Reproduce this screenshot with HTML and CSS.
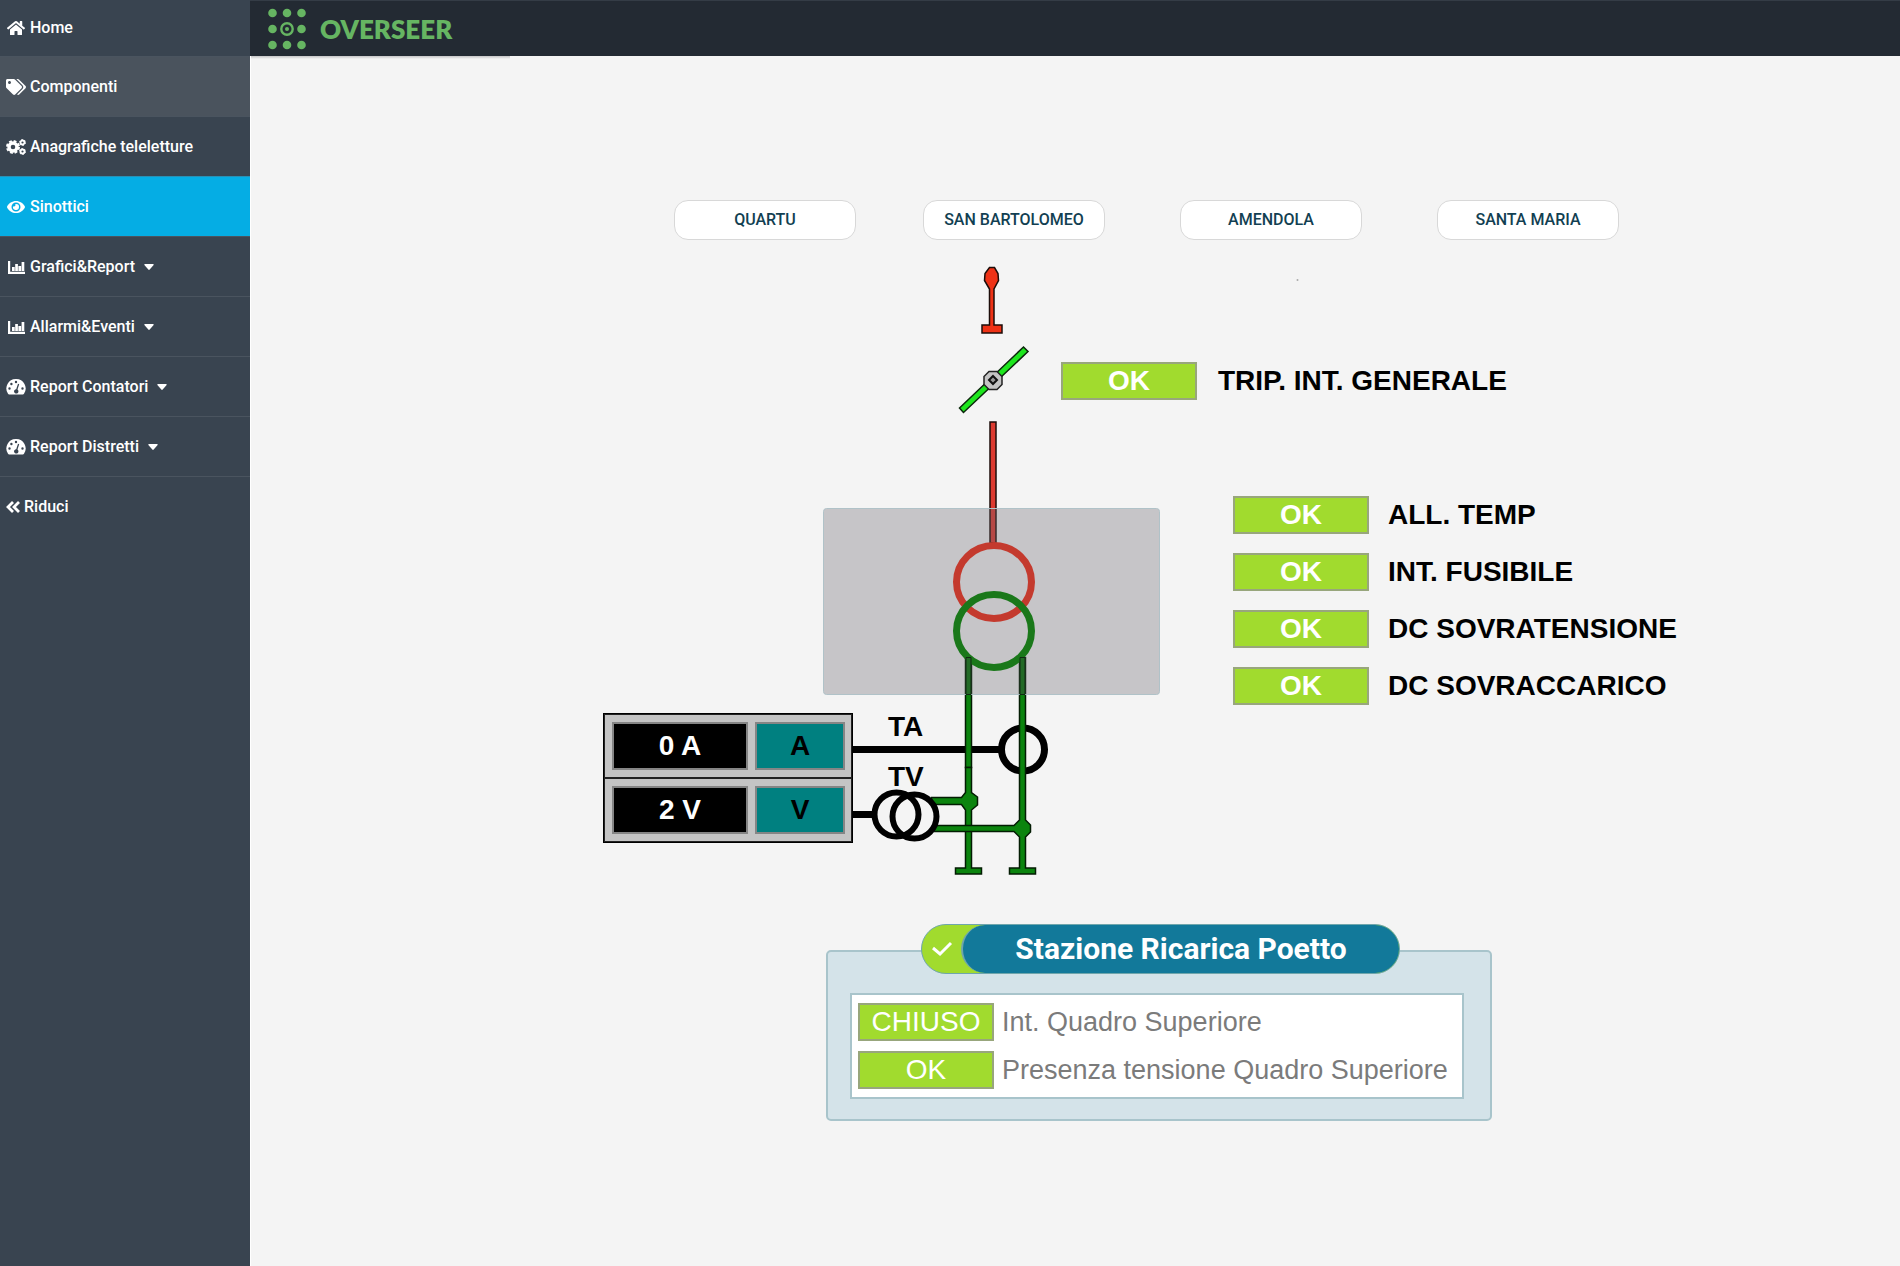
FILE: index.html
```html
<!DOCTYPE html>
<html lang="it">
<head>
<meta charset="utf-8">
<title>Overseer - Sinottici</title>
<meta name="viewport" content="width=device-width, initial-scale=1">
<link rel="stylesheet" href="styles.css">
</head>
<body>
<svg class="defs" aria-hidden="true">
  <symbol id="i-chart" viewBox="0 0 18 16">
    <path d="M1 2h2.200v10.800H18V15H1z"/>
    <path d="M5 8h2.700v4H5zM8.200 5h2.700v7H8.200zM11.400 7h2.700v5h-2.700zM14.600 3h2.700v9h-2.700z"/>
  </symbol>
  <symbol id="i-gauge" viewBox="0 0 20 16">
    <path fill-rule="evenodd" d="M10 0a9.500 9.500 0 0 0-8 14.800q.4.700 1.200.7h13.600q.8 0 1.200-.7A9.500 9.500 0 0 0 10 0zM3.500 8.300a1.200 1.200 0 1 1 0 2.400 1.200 1.200 0 0 1 0-2.400zM5.400 3.800a1.200 1.200 0 1 1 0 2.400 1.200 1.200 0 0 1 0-2.400zM10 1.800a1.200 1.200 0 1 1 0 2.400 1.200 1.200 0 0 1 0-2.400zM16.500 8.300a1.200 1.200 0 1 1 0 2.400 1.200 1.200 0 0 1 0-2.400zM12 4.800l1.200.4-1.700 5.400a2.200 2.200 0 1 1-1.300-.4z"/>
  </symbol>
  <symbol id="i-caret" viewBox="0 0 10 6"><path d="M1 0h8q1 .2.600 1L5.700 5.600q-.7.600-1.400 0L.4 1Q0 .2 1 0z"/></symbol>
</svg>

<div class="app">
  <nav class="sidebar" aria-label="Menu principale">
    <a class="item" href="#home">
      <svg class="icon" viewBox="0 0 576 512"><path d="M280.370 148.260L96 300.110V464a16 16 0 0 0 16 16l112.060-.29a16 16 0 0 0 15.920-16V368a16 16 0 0 1 16-16h64a16 16 0 0 1 16 16v95.640a16 16 0 0 0 16 16.050L464 480a16 16 0 0 0 16-16V300L295.670 148.260a12.190 12.190 0 0 0-15.300 0zM571.600 251.470L488 182.560V44.050a12 12 0 0 0-12-12h-56a12 12 0 0 0-12 12v72.610L318.470 43a48 48 0 0 0-61 0L4.340 251.470a12 12 0 0 0-1.600 16.900l25.500 31A12 12 0 0 0 45.150 301l235.220-193.740a12.190 12.190 0 0 1 15.300 0L530.900 301a12 12 0 0 0 16.900-1.600l25.500-31a12 12 0 0 0-1.700-16.930z"/></svg>
      <span>Home</span>
    </a>
    <a class="item hover" href="#componenti">
      <svg class="icon" viewBox="0 0 640 512"><path d="M497.941 225.941L286.059 14.059A48 48 0 0 0 252.118 0H48C21.490 0 0 21.490 0 48v204.118a48 48 0 0 0 14.059 33.941l211.882 211.882c18.744 18.745 49.136 18.746 67.882 0l204.118-204.118c18.745-18.745 18.745-49.137 0-67.882zM112 160c-26.510 0-48-21.490-48-48s21.490-48 48-48 48 21.490 48 48-21.490 48-48 48zm513.941 133.823L421.823 497.941c-18.745 18.745-49.137 18.745-67.882 0l-.36-.36L527.640 323.522c16.999-16.999 26.360-39.600 26.360-63.640s-9.362-46.641-26.360-63.640L331.397 0h48.721a48 48 0 0 1 33.941 14.059l211.882 211.882c18.745 18.745 18.745 49.137 0 67.882z"/></svg>
      <span>Componenti</span>
    </a>
    <a class="item" href="#anagrafiche">
      <svg class="icon" viewBox="0 0 20 16" fill="none" stroke="currentColor">
        <circle cx="7" cy="8" r="4" stroke-width="3.400"/>
        <circle cx="7" cy="8" r="6" stroke-width="2" stroke-dasharray="2.800 1.910"/>
        <circle cx="16.500" cy="3.500" r="2" stroke-width="1.800"/>
        <circle cx="16.500" cy="3.500" r="3" stroke-width="1" stroke-dasharray="1.600 1.540"/>
        <circle cx="16.500" cy="12.500" r="2" stroke-width="1.800"/>
        <circle cx="16.500" cy="12.500" r="3" stroke-width="1" stroke-dasharray="1.600 1.540"/>
      </svg>
      <span>Anagrafiche teleletture</span>
    </a>
    <a class="item active" href="#sinottici" aria-current="page">
      <svg class="icon" viewBox="0 0 576 512"><path d="M572.520 241.400C518.290 135.590 410.930 64 288 64S57.680 135.640 3.480 241.410a32.350 32.350 0 0 0 0 29.190C57.710 376.410 165.070 448 288 448s230.320-71.640 284.520-177.410a32.350 32.350 0 0 0 0-29.190zM288 400a144 144 0 1 1 144-144 143.930 143.930 0 0 1-144 144zm0-240a95.310 95.310 0 0 0-25.310 3.790 47.850 47.850 0 0 1-66.900 66.900A95.780 95.780 0 1 0 288 160z"/></svg>
      <span>Sinottici</span>
    </a>
    <button class="item" type="button"><svg class="icon"><use href="#i-chart"/></svg><span>Grafici&amp;Report</span><svg class="caret"><use href="#i-caret"/></svg></button>
    <button class="item" type="button"><svg class="icon"><use href="#i-chart"/></svg><span>Allarmi&amp;Eventi</span><svg class="caret"><use href="#i-caret"/></svg></button>
    <button class="item" type="button"><svg class="icon"><use href="#i-gauge"/></svg><span>Report Contatori</span><svg class="caret"><use href="#i-caret"/></svg></button>
    <button class="item" type="button"><svg class="icon"><use href="#i-gauge"/></svg><span>Report Distretti</span><svg class="caret"><use href="#i-caret"/></svg></button>
    <button class="item" type="button">
      <svg class="icon narrow" viewBox="0 0 14 14" fill="none" stroke="currentColor" stroke-width="2.800"><path d="M7 2L2 7l5 5M13 2L8 7l5 5"/></svg>
      <span>Riduci</span>
    </button>
  </nav>

  <div class="page">
    <header class="topbar">
      <svg class="logo" viewBox="0 0 38 42" aria-hidden="true">
        <circle cx="4.500" cy="5" r="4.300"/><circle cx="19" cy="5" r="4.300"/><circle cx="33.500" cy="5" r="4.300"/>
        <circle cx="4.500" cy="21" r="4.300"/><circle cx="33.500" cy="21" r="4.300"/>
        <circle cx="4.500" cy="37" r="4.300"/><circle cx="19" cy="37" r="4.300"/><circle cx="33.500" cy="37" r="4.300"/>
        <circle cx="19" cy="21" r="5.700" fill="none" stroke="currentColor" stroke-width="2.400"/><circle cx="19" cy="21" r="2"/>
      </svg>
      <span class="brand">OVERSEER</span>
    </header>

    <main class="content">
      <div class="stations">
        <button type="button">QUARTU</button>
        <button type="button">SAN BARTOLOMEO</button>
        <button type="button">AMENDOLA</button>
        <button type="button">SANTA MARIA</button>
      </div>

      <div class="synoptic">
        <!-- single-line diagram: incoming feeder, breaker, transformer, TA and TV -->
        <svg class="wiring" viewBox="603 260 1080 664" aria-hidden="true">
          <circle cx="1297.500" cy="280" r="1" fill="#aaa"/>

          <g fill="#ee3216" stroke="#1c0d0a" stroke-width="1.500">
            <path d="M989.500 267.500h5l3.500 6 .5 7-4.500 8.500v36h8v8h-20v-8h7.500v-36l-5-8.500.5-7z"/>
          </g>
          <path d="M963.500 412.500l-4-4.500 64-61 4.500 4.500z" fill="#1ee61e" stroke="#0c280c" stroke-width="1.500"/>
          <path d="M989 371.500h8l5 5v8l-5 5h-8l-5-5v-8z" fill="#c4c4c4" stroke="#222" stroke-width="1.500"/>
          <path d="M993 376l4 4-4 4-4-4z" fill="#999" stroke="#111" stroke-width="2"/>
          <rect x="990" y="422" width="6" height="121" fill="#dc3a30" stroke="#1c0d0a" stroke-width="1.500"/>

          <g fill="none" stroke="#000" stroke-width="7">
            <path d="M853 749.500h146M853 814.500h20"/>
            <circle cx="1023" cy="749.500" r="21.500"/>
          </g>

          <g fill="#0b840e" stroke="#031c03" stroke-width="1.500">
            <rect x="965.500" y="657.500" width="6" height="110"/>
            <path d="M965.500 767.500h6v25l6 4.500v8l-6 5v58h10v6h-26v-6h10v-58l-4-5.500h-30v-7h30l4-5z"/>
            <path d="M1019.500 657.500h6v162.500l5 5v7l-5 5v31h10v6h-26v-6h10v-31l-5.500-5.500h-80v-6h80l5.500-5.500z"/>
          </g>
          <g fill="none" stroke="#000" stroke-width="6">
            <circle cx="896.500" cy="814.500" r="22"/>
            <circle cx="914.500" cy="816.500" r="22"/>
          </g>

          <rect x="823.500" y="508.500" width="336" height="186" rx="3" fill="#6a6870" fill-opacity=".33" stroke="#b0c2c8"/>
          <g fill="none" stroke-width="7">
            <ellipse cx="994" cy="582" rx="37.500" ry="36.500" stroke="#c43a2e"/>
            <ellipse cx="994" cy="631" rx="37.500" ry="36.500" stroke="#1a781a"/>
          </g>
          <path d="M966 657.500h5v37h-5zM1020 657.500h5v37h-5z" fill="#226a26" stroke="#102a12" stroke-width="1"/>
        </svg>

        <div class="signal general"><output class="badge">OK</output><span>TRIP. INT. GENERALE</span></div>

        <div class="alarms">
          <div class="signal"><output class="badge">OK</output><span>ALL. TEMP</span></div>
          <div class="signal"><output class="badge">OK</output><span>INT. FUSIBILE</span></div>
          <div class="signal"><output class="badge">OK</output><span>DC SOVRATENSIONE</span></div>
          <div class="signal"><output class="badge">OK</output><span>DC SOVRACCARICO</span></div>
        </div>

        <div class="meters">
          <div class="meter"><output class="value">0 A</output><span class="unit">A</span></div>
          <div class="meter"><output class="value">2 V</output><span class="unit">V</span></div>
        </div>
        <span class="tag ta">TA</span>
        <span class="tag tv">TV</span>
      </div>

      <section class="station">
        <h1 class="station-title">
          <svg class="check" viewBox="0 0 22 16" aria-hidden="true"><path d="M2 7l7 6L20 2"/></svg>
          <span>Stazione Ricarica Poetto</span>
        </h1>
        <div class="station-body">
          <div class="state"><output class="badge">CHIUSO</output><span>Int. Quadro Superiore</span></div>
          <div class="state"><output class="badge">OK</output><span>Presenza tensione Quadro Superiore</span></div>
        </div>
      </section>
    </main>
  </div>
</div>
</body>
</html>
```
FILE: styles.css
```css
* { box-sizing: border-box; }

body {
  margin: 0;
  background: #f4f4f4;
  font-family: "Liberation Sans", Arial, sans-serif;
}

.defs { position: absolute; width: 0; height: 0; }

.app {
  display: grid;
  grid-template-columns: 250px minmax(0, 1fr);
  min-height: 100vh;
}

/* sidebar */
.sidebar {
  display: flex;
  flex-direction: column;
  background: #394450;
}

.item {
  display: flex;
  align-items: center;
  gap: 4px;
  height: 60px;
  padding: 0 6px;
  border: 0;
  border-top: 1px solid #4a545f;
  background: none;
  color: #fff;
  font: 500 16px/20px Roboto, sans-serif;
  text-align: left;
  text-decoration: none;
  cursor: pointer;
}

.item:first-child { height: 56px; border-top: 0; }
.item.hover { background: #4a535d; }
.item.active { background: #05ade4; border-color: #2a8fb4; }

.icon { width: 20px; height: 16px; fill: currentColor; flex: none; }
.icon[fill="none"] { fill: none; }
.icon.narrow { width: 14px; height: 14px; }
.caret { width: 10px; height: 6px; margin-left: 5px; fill: currentColor; }

/* header */
.page { display: flex; flex-direction: column; }

.topbar {
  display: flex;
  align-items: center;
  gap: 14px;
  height: 56px;
  padding: 0 18px;
  background: #232a33;
  border-top: 1px solid #343c46;
  color: #66b562;
}

.logo { width: 38px; height: 42px; fill: currentColor; }
.brand { font: 800 26px/32px Lato, sans-serif; }

/* synoptic page */
.content {
  flex: 1;
  padding: 144px 217px 144px 352px;
  border-left: 1px solid #fff;
  background: linear-gradient(#c4c4c6, #f4f4f4) 0 0 / 259px 3px no-repeat;
}

.stations {
  display: grid;
  grid-template-columns: 249px 257px 257px 182px;
  margin-left: 71px;
}

.stations button {
  width: 182px;
  height: 40px;
  padding: 0;
  border: 1px solid #d8d8d8;
  border-radius: 14px;
  background: #fff;
  color: #123f52;
  font: 500 16px/20px Roboto, sans-serif;
  cursor: pointer;
}

.synoptic {
  position: relative;
  width: 1080px;
  height: 664px;
  margin-top: 20px;
  color: #000;
  font-size: 28px;
  font-weight: bold;
  line-height: 32px;
}

.wiring { position: absolute; left: 0; top: 0; width: 1080px; height: 664px; }

.signal { display: flex; align-items: center; gap: 19px; white-space: nowrap; }

.badge {
  display: flex;
  align-items: center;
  justify-content: center;
  width: 136px;
  height: 38px;
  border: 2px solid #98a67c;
  background: #a1db2e;
  color: #fff;
  font-size: 28px;
}

.general { position: absolute; left: 458px; top: 102px; gap: 21px; }

.alarms {
  position: absolute;
  left: 630px;
  top: 236px;
  display: grid;
  gap: 19px;
}

.meters {
  position: absolute;
  left: 0;
  top: 453px;
  width: 250px;
  border: 1px solid #000;
}

.meter {
  display: grid;
  grid-template-columns: 136px 90px;
  gap: 7px;
  padding: 7px;
  border: 1px solid #222;
  background: #c4c4c4;
}

.value, .unit {
  display: flex;
  align-items: center;
  justify-content: center;
  height: 48px;
  border: 2px solid #858585;
}

.value { background: #000; color: #fff; }
.unit { background: #008080; }

.tag { position: absolute; left: 285px; }
.ta { top: 451px; }
.tv { top: 501px; }

/* station card */
.station {
  position: relative;
  width: 666px;
  margin: 26px 0 0 223px;
  padding: 41px 26px 20px 22px;
  border: 2px solid #a8c4cb;
  border-radius: 5px;
  background: #d4e3e9;
}

.station-title {
  position: absolute;
  left: 93px;
  right: 90px;
  top: -28px;
  display: flex;
  align-items: center;
  gap: 8px;
  height: 50px;
  margin: 0;
  padding-left: 9px;
  border: 1px solid #6fa6ac;
  border-radius: 25px;
  background: #a1db2e;
  color: #fff;
  font: 700 30px/40px Roboto, sans-serif;
}

.station-title span {
  flex: 1;
  display: flex;
  align-items: center;
  justify-content: center;
  height: 48px;
  border-left: 2px solid #6fa6ac;
  border-radius: 24px;
  background: #12799a;
  white-space: nowrap;
}

.check {
  width: 22px;
  height: 16px;
  fill: none;
  stroke: #fff;
  stroke-width: 3;
}

.station-body {
  display: grid;
  gap: 10px;
  padding: 8px 6px;
  border: 2px solid #a8c4cb;
  background: #fff;
  font-size: 27px;
  line-height: 32px;
}

.state {
  display: flex;
  align-items: center;
  gap: 8px;
  color: #7b7b7b;
  white-space: nowrap;
}
```
